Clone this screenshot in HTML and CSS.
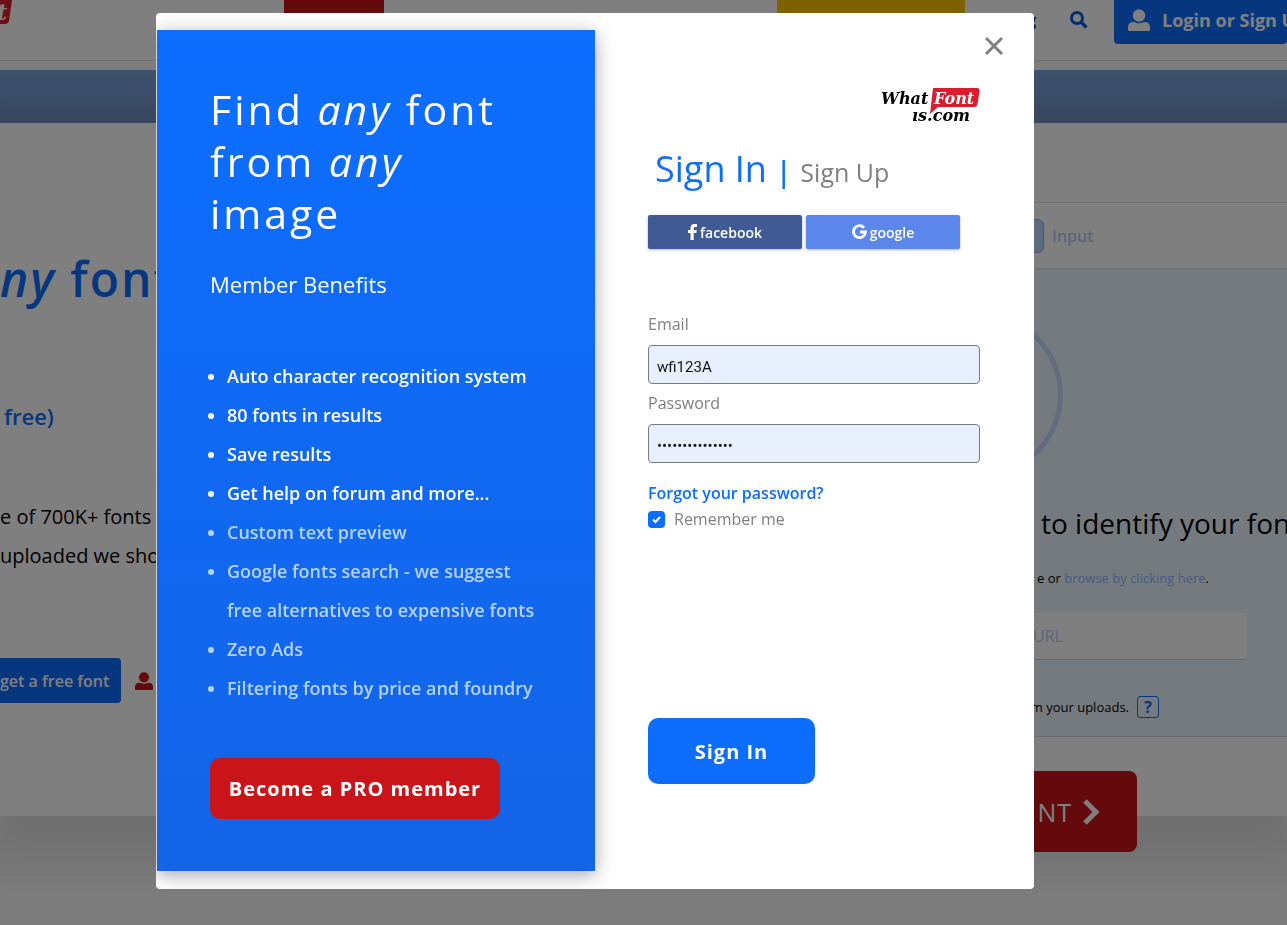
FILE: index.html
```
<!DOCTYPE html>
<html lang="en">
  <head>
    <meta charset="UTF-8" />
    <meta name="viewport" content="width=device-width, initial-scale=1.0" />
    <title>WhatFontIs - Sign In</title>
    <link rel="stylesheet" href="styles.css">
  </head>
  <body>
    <div class="page">
      <header class="header">
        <svg class="header-logo" width="12" height="25" viewBox="0 0 12 25">
          <path d="M0 0H12L9 21Q8 24 5 24H0Z" fill="#dc1c2c" />
          <text x="-3" y="20" class="header-logo-text">t</text>
        </svg>
        <span class="tab-red"></span>
        <span class="tab-yellow"></span>
        <a href="#" class="nav-link">Blog</a>
        <a href="#" class="nav-search" aria-label="Search">
          <svg width="18" height="18" viewBox="0 0 18 18">
            <circle cx="7" cy="7" r="5.5" fill="none" stroke="#0d5be0" stroke-width="3" />
            <path d="M11 11L16.5 16.5" stroke="#0d5be0" stroke-width="3.4" />
          </svg>
        </a>
        <button class="login-btn">
          <svg width="22" height="22" viewBox="0 0 22 22" fill="currentColor">
            <circle cx="11" cy="6.5" r="6.2" />
            <path d="M0 21V18Q0 13 6 13Q11 15.500 16 13Q22 13 22 18V21Q22 22 21 22H1Q0 22 0 21Z" />
          </svg>
          Login or Sign Up
        </button>
      </header>
      <div class="band"></div>

      <main class="hero">
        <section class="hero-copy">
          <h2><em>ny</em> font</h2>
          <p class="hero-free">free)</p>
          <p class="hero-text">e of 700K+ fonts<br />uploaded we show</p>
          <div class="hero-actions">
            <button class="free-btn">get a free font</button>
            <svg width="18" height="18" viewBox="0 0 22 22" fill="#c9141a">
              <circle cx="11" cy="6.500" r="6.2" />
              <path d="M0 21V18Q0 13 6 13Q11 15.500 16 13Q22 13 22 18V21Q22 22 21 22H1Q0 22 0 21Z" />
            </svg>
          </div>
        </section>

        <section class="uploader">
          <div class="steps">
            <span class="step-number"></span>
            <span class="step-name">Input</span>
          </div>
          <div class="drop-area">
            <div class="drop-circle"></div>
            <p class="drop-title">to identify your fonts</p>
            <p class="drop-hint">e or <a href="#">browse by clicking here</a>.</p>
            <div class="url-row">
              <input class="url-input" type="text" placeholder="URL" aria-label="Image URL" />
            </div>
            <p class="drop-note">m your uploads. <button class="help-btn">?</button></p>
          </div>
          <button class="next-btn">
            NT
            <svg width="18" height="28" viewBox="0 0 18 28">
              <path d="M3 3L14 14L3 25" fill="none" stroke="currentColor" stroke-width="5" />
            </svg>
          </button>
        </section>
      </main>
    </div>

    <div class="backdrop">
      <div class="modal" role="dialog" aria-modal="true" aria-label="Sign In">
        <section class="benefits">
          <h1>Find <em>any</em> font from <em>any</em> image</h1>
          <h3>Member Benefits</h3>
          <ul>
            <li>Auto character recognition system</li>
            <li>80 fonts in results</li>
            <li>Save results</li>
            <li>Get help on forum and more...</li>
            <li class="pro">Custom text preview</li>
            <li class="pro">Google fonts search - we suggest free alternatives to expensive fonts</li>
            <li class="pro">Zero Ads</li>
            <li class="pro">Filtering fonts by price and foundry</li>
          </ul>
          <button class="pro-btn">Become a PRO member</button>
        </section>

        <section class="sign-in">
          <button class="close-btn" aria-label="Close">
            <svg width="20" height="20" viewBox="0 0 20 20">
              <path d="M2 2L18 18M18 2L2 18" stroke="#808080" stroke-width="3" />
            </svg>
          </button>

          <svg class="logo" width="99" height="38" viewBox="0 0 99 38">
            <path d="M52 1H96Q99 1 98.500 4L96.500 17Q96 20 93 20H57L49 27Z" fill="#dc1c2c" />
            <text x="0" y="17" class="logo-text">What</text>
            <text x="53" y="17" class="logo-text logo-font">Font</text>
            <text x="31" y="34" class="logo-text">ıs.com</text>
          </svg>

          <div class="tabs">
            <a href="#" class="tab-in">Sign In</a>
            <span class="tab-line">|</span>
            <a href="#" class="tab-up">Sign Up</a>
          </div>

          <div class="social">
            <button class="social-btn facebook">
              <svg width="9" height="16" viewBox="0 0 9 16" fill="currentColor">
                <path d="M2.500 16V9H0V6H2.500V4Q2.500 0 6.200 0H9V2.900H7.200Q5.700 2.900 5.700 4.300V6H8.800L8.300 9H5.700V16Z" />
              </svg>
              facebook
            </button>
            <button class="social-btn google">
              <svg width="15" height="16" viewBox="0 0 15 16">
                <path d="M12 3.700A6 6 0 1 0 13.500 8H8" fill="none" stroke="currentColor" stroke-width="2.800" />
              </svg>
              google
            </button>
          </div>

          <form class="form">
            <label for="email">Email</label>
            <input id="email" class="field" type="text" value="wfi123A" />
            <label for="password">Password</label>
            <input id="password" class="field" type="password" value="123456789012345" />
            <a href="#" class="forgot">Forgot your password?</a>
            <label class="remember">
              <input type="checkbox" checked />
              Remember me
            </label>
            <button type="button" class="submit-btn">Sign In</button>
          </form>
        </section>
      </div>
    </div>
  </body>
</html>
```
FILE: styles.css
```
* {
  box-sizing: border-box;
}

body {
  margin: 0;
  font-family: "Open Sans", Arial, sans-serif;
  font-size: 16px;
  color: #000;
  background: #fafafa;
  overflow: hidden;
}

h1,
h2,
h3,
p,
ul {
  margin: 0;
}

a {
  text-decoration: none;
}

button {
  border: 0;
  font-family: inherit;
  cursor: pointer;
}

/* Page behind the dialog */
.page {
  overflow: hidden;
  min-height: 100vh;
}

.header {
  display: flex;
  align-items: flex-start;
  height: 61px;
  background: #fff;
  border-bottom: 1px solid #dcdfe4;
}

.header-logo {
  flex: none;
  margin-right: 272px;
}

.header-logo-text {
  font: italic bold 22px "DejaVu Serif", serif;
  fill: #fff;
}

.tab-red {
  flex: none;
  width: 100px;
  height: 40px;
  margin-right: 393px;
  background: #c9141a;
}

.tab-yellow {
  flex: none;
  width: 188px;
  height: 40px;
  background: #ffc107;
}

.nav-link {
  margin: 9px 0 0 auto;
  font-weight: 700;
  line-height: 22px;
  color: #0b2a7a;
}

.nav-search {
  margin: 11px 26px 0 34px;
}

.login-btn {
  flex: none;
  display: flex;
  align-items: center;
  gap: 12px;
  width: 173px;
  height: 48px;
  margin-top: -4px;
  padding: 0 14px;
  border-radius: 4px;
  background: #0d6efd;
  color: #fff;
  font-size: 18px;
  font-weight: 700;
  white-space: nowrap;
}

.login-btn svg {
  flex: none;
}

.band {
  height: 53px;
  margin-top: 9px;
  background: linear-gradient(#7ca5dc, #7491c0);
}

.hero {
  display: flex;
  justify-content: space-between;
  height: 693px;
  background: #fff;
  box-shadow: 0 30px 40px 20px rgba(0, 0, 0, 0.1);
}

.hero-copy {
  padding-top: 126px;
  white-space: nowrap;
}

.hero-copy h2 {
  font-size: 48px;
  font-weight: 600;
  line-height: 60px;
  letter-spacing: 2px;
  color: #0d6efd;
}

.hero-free {
  padding: 92px 0 0 4px;
  font-size: 22px;
  font-weight: 600;
  line-height: 30px;
  color: #0d6efd;
}

.hero-text {
  padding-top: 66px;
  font-size: 20px;
  line-height: 39px;
}

.hero-actions {
  display: flex;
  align-items: center;
  gap: 14px;
  padding-top: 83px;
}

.free-btn {
  height: 45px;
  width: 121px;
  padding: 0 14px 0 0;
  border-radius: 0 4px 4px 0;
  background: #0d6efd;
  color: #fff;
  font-size: 16px;
  font-weight: 600;
  text-align: right;
}

.uploader {
  flex: none;
  display: flex;
  flex-direction: column;
  align-items: center;
  width: 614px;
  padding-top: 79px;
}

.steps {
  flex: none;
  display: flex;
  align-items: center;
  gap: 8px;
  width: 100%;
  height: 67px;
  padding-left: 339px;
  border-top: 1px solid #dcdfe4;
  border-bottom: 1px solid #dcdfe4;
}

.step-number {
  width: 32px;
  height: 34px;
  border: 1px solid #8ab4f0;
  border-radius: 6px;
  background: #b8d8ff;
}

.step-name {
  font-weight: 600;
  color: #b9cdf5;
}

.drop-area {
  flex: none;
  width: 100%;
  height: 468px;
  padding-top: 43px;
  background: #ebf4ff;
  border-bottom: 1px solid #cdd6e2;
}

.drop-circle {
  width: 166px;
  height: 166px;
  margin: 0 auto;
  border: 5px solid #c4d8ff;
  border-radius: 50%;
}

.drop-title {
  padding: 25px 0 0 368px;
  font-size: 28px;
  line-height: 40px;
  white-space: nowrap;
}

.drop-hint {
  padding: 23px 78px 0 0;
  font-size: 13px;
  line-height: 24px;
  text-align: right;
}

.drop-hint a {
  color: #8fb4ff;
}

.url-row {
  display: flex;
  justify-content: center;
  padding-top: 23px;
}

.url-input {
  width: 532px;
  height: 47px;
  padding: 0 0 0 319px;
  border: 0;
  border-bottom: 1px solid #ccc;
  background: #fff;
  font-family: inherit;
  font-size: 16px;
}

.url-input::placeholder {
  color: #b9cdf5;
  opacity: 1;
}

.drop-note {
  display: flex;
  align-items: center;
  justify-content: flex-end;
  gap: 8px;
  padding: 36px 128px 0 0;
  font-size: 13px;
}

.help-btn {
  width: 22px;
  height: 22px;
  padding: 0;
  border: 1px solid #0d6efd;
  border-radius: 3px;
  background: none;
  color: #0d6efd;
  font-size: 16px;
  font-weight: 700;
  line-height: 20px;
}

.next-btn {
  flex: none;
  display: flex;
  align-items: center;
  justify-content: flex-end;
  gap: 10px;
  width: 314px;
  height: 81px;
  margin-top: 34px;
  padding: 0 37px;
  border-radius: 8px;
  background: #c9141a;
  color: #fff;
  font-size: 25px;
  letter-spacing: 1px;
}

/* Dialog */
.backdrop {
  position: fixed;
  inset: 0;
  display: flex;
  justify-content: center;
  align-items: flex-start;
  padding: 13px 97px 0 0;
  background: rgba(0, 0, 0, 0.5);
}

.modal {
  display: flex;
  width: 878px;
  padding: 17px 0 18px 1px;
  border-radius: 4px;
  background: #fff;
  overflow: hidden;
}

.benefits {
  flex: none;
  width: 438px;
  padding: 53px 53px 52px;
  background: linear-gradient(#0d6eff, #1464e6);
  box-shadow: 0 4px 18px rgba(0, 0, 0, 0.35);
  color: #fff;
}

.benefits h1 {
  font-size: 41px;
  font-weight: 400;
  line-height: 52px;
  letter-spacing: 3px;
}

.benefits h3 {
  margin-top: 28px;
  font-size: 22px;
  font-weight: 400;
  line-height: 34px;
}

.benefits ul {
  margin-top: 56px;
  padding-left: 17px;
  font-size: 18px;
  font-weight: 600;
  line-height: 39px;
}

.benefits .pro {
  color: #b4d2fd;
}

.pro-btn {
  width: 290px;
  height: 61px;
  margin-top: 50px;
  padding: 0;
  border-radius: 10px;
  background: #c9141a;
  color: #fff;
  font-size: 20px;
  font-weight: 700;
  letter-spacing: 1px;
}

.sign-in {
  flex: 1;
  display: flex;
  flex-direction: column;
  padding: 6px 54px 0 53px;
}

.close-btn {
  align-self: flex-end;
  height: 20px;
  margin-right: -24px;
  padding: 0;
  background: none;
}

.logo {
  align-self: flex-end;
  margin-top: 31px;
}

.logo-text {
  font: italic bold 16px "DejaVu Serif", serif;
}

.logo-font {
  fill: #fff;
}

.tabs {
  display: flex;
  align-items: baseline;
  gap: 9px;
  height: 52px;
  margin-top: 19px;
  padding-left: 7px;
  color: #0d6efd;
  line-height: 50px;
}

.tab-in {
  font-size: 36px;
  color: #0d6efd;
}

.tab-line {
  font-size: 28px;
  font-weight: 600;
}

.tab-up {
  font-size: 25px;
  color: #808080;
}

.social {
  display: flex;
  gap: 4px;
  margin-top: 19px;
}

.social-btn {
  display: flex;
  align-items: center;
  justify-content: center;
  gap: 3px;
  width: 154px;
  height: 34px;
  padding: 0;
  border-radius: 2px;
  box-shadow: 0 1px 3px rgba(0, 0, 0, 0.3);
  color: #fff;
  font-size: 14px;
  font-weight: 600;
}

.facebook {
  background: #405a93;
}

.google {
  background: #5b86ec;
}

.form {
  display: flex;
  flex-direction: column;
  align-items: flex-start;
  margin-top: 63px;
  color: #808080;
  line-height: 25px;
}

.field {
  width: 100%;
  height: 39px;
  margin: 8px 0 7px;
  padding: 4px 8px 0;
  border: 1px solid #767b87;
  border-radius: 4px;
  background: #e8f0fe;
  color: #111;
  font-family: Roboto, sans-serif;
  font-size: 15px;
}

.forgot {
  margin-top: 11px;
  color: #0d6efd;
  font-weight: 600;
}

.remember {
  display: flex;
  align-items: center;
  gap: 9px;
  margin-top: 1px;
}

.remember input {
  appearance: none;
  width: 17px;
  height: 17px;
  margin: 0;
  border-radius: 4px;
  background: #0d6efd url("data:image/svg+xml,%3Csvg xmlns='http://www.w3.org/2000/svg' viewBox='0 0 17 17'%3E%3Cpath d='M5 8.500L7.500 11L12 6' fill='none' stroke='white' stroke-width='2'/%3E%3C/svg%3E") center no-repeat;
}

.submit-btn {
  width: 167px;
  height: 66px;
  margin-top: 186px;
  padding: 0;
  border-radius: 10px;
  background: #0d6efd;
  color: #fff;
  font-size: 20px;
  font-weight: 700;
  letter-spacing: 1px;
}
```
